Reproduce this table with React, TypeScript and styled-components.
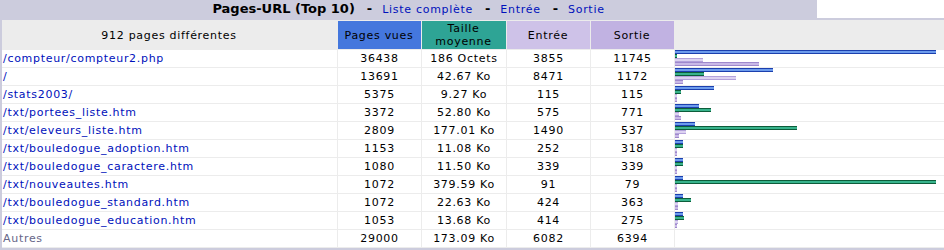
import styled, { createGlobalStyle } from "styled-components";

const GlobalStyle = createGlobalStyle`
    html, body {
        margin: 0;
        padding: 0;
        background: #fff;
        overflow: hidden;
    }
    body {
        font-family: "DejaVu Sans", Verdana, sans-serif;
    }
`;

const Frame = styled.div`
    width: 950px;
`;

const TitleRow = styled.div`
    display: flex;
    height: 18px;
`;

const TitleCell = styled.div`
    width: 817px;
    background: #ccccdd;
    display: flex;
    justify-content: center;
    align-items: center;
    font: bold 13px/18px "DejaVu Sans", Verdana, sans-serif;
    color: #000;
    white-space: nowrap;
`;

const Blank = styled.div`
    flex: 1;
    background: #fff;
`;

const Sep = styled.span`
    font-weight: bold;
    padding: 0 10px 0 12px;
`;

const TitleLink = styled.a`
    font: 11px "DejaVu Sans", Verdana, sans-serif;
    letter-spacing: 0.7px;
    color: #0011bb;
    text-decoration: none;
`;

const DataBox = styled.div`
    border: 2px solid #ccccdd;
    border-bottom-width: 4px;
`;

const Table = styled.table`
    width: 100%;
    table-layout: fixed;
    border-collapse: separate;
    border-spacing: 0;
    background: #fff;
    border-top: 1px solid #ececec;
`;

const Col = styled.col<{ $w?: number }>`
    width: ${(p) => (p.$w ? `${p.$w}px` : "auto")};
`;

const Head = styled.th<{ $bg: string }>`
    box-sizing: border-box;
    background: ${(p) => p.$bg};
    padding: 1px 2px 1px 1px;
    border-right: 1px solid #ececec;
    border-bottom: 1px solid #ececec;
    font: normal 11px/13px "DejaVu Sans", Verdana, sans-serif;
    letter-spacing: 0.7px;
    color: #000;
    text-align: center;
`;

const Cell = styled.td<{ $left?: boolean }>`
    box-sizing: border-box;
    padding: 2px 2px 2px ${(p) => (p.$left ? "1px" : "2px")};
    border-right: 1px solid #ececec;
    border-bottom: 1px solid #ececec;
    font: 11px/13px "DejaVu Sans", Verdana, sans-serif;
    letter-spacing: 0.7px;
    color: #000;
    text-align: ${(p) => (p.$left ? "left" : "center")};
    white-space: nowrap;
    overflow: hidden;
`;

const BarCell = styled.td`
    box-sizing: border-box;
    padding: 0 0 1px 0;
    vertical-align: top;
    border-bottom: 1px solid #ececec;
    line-height: 0;
`;

const PageLink = styled.a`
    color: #0011bb;
    text-decoration: none;
`;

const Others = styled.span`
    color: #666688;
`;

const barColors = {
    p: ["#1b3fae", "#6c9bec"],
    k: ["#0d5d3b", "#38b38c"],
    e: ["#b3a2db", "#dcd2f1"],
    x: ["#9f89cc", "#c9b9e7"],
};

const Bar = styled.div<{ $kind: keyof typeof barColors }>`
    height: 4px;
    background: linear-gradient(
        ${(p) => barColors[p.$kind][0]} 0 1px,
        ${(p) => barColors[p.$kind][1]} 1px 3px,
        ${(p) => barColors[p.$kind][0]} 3px
    );
`;

type Row = {
    url: string;
    pages: number;
    size: string;
    ko: number;
    entry: number;
    exit: number;
};

const rows: Row[] = [
    { url: "/compteur/compteur2.php", pages: 36438, size: "186 Octets", ko: 0.18, entry: 3855, exit: 11745 },
    { url: "/", pages: 13691, size: "42.67 Ko", ko: 42.67, entry: 8471, exit: 1172 },
    { url: "/stats2003/", pages: 5375, size: "9.27 Ko", ko: 9.27, entry: 115, exit: 115 },
    { url: "/txt/portees_liste.htm", pages: 3372, size: "52.80 Ko", ko: 52.8, entry: 575, exit: 771 },
    { url: "/txt/eleveurs_liste.htm", pages: 2809, size: "177.01 Ko", ko: 177.01, entry: 1490, exit: 537 },
    { url: "/txt/bouledogue_adoption.htm", pages: 1153, size: "11.08 Ko", ko: 11.08, entry: 252, exit: 318 },
    { url: "/txt/bouledogue_caractere.htm", pages: 1080, size: "11.50 Ko", ko: 11.5, entry: 339, exit: 339 },
    { url: "/txt/nouveautes.htm", pages: 1072, size: "379.59 Ko", ko: 379.59, entry: 91, exit: 79 },
    { url: "/txt/bouledogue_standard.htm", pages: 1072, size: "22.63 Ko", ko: 22.63, entry: 424, exit: 363 },
    { url: "/txt/bouledogue_education.htm", pages: 1053, size: "13.68 Ko", ko: 13.68, entry: 414, exit: 275 },
];

const MAX_W = 261;
const maxPages = 36438;
const maxKo = 379.59;
const w = (v: number, max: number) => Math.max(2, Math.round((v / max) * MAX_W));

function App() {
    return (
        <Frame>
            <GlobalStyle />
            <TitleRow>
                <TitleCell>
                    Pages-URL (Top 10)
                    <Sep>-</Sep>
                    <TitleLink href="#">Liste complète</TitleLink>
                    <Sep>-</Sep>
                    <TitleLink href="#">Entrée</TitleLink>
                    <Sep>-</Sep>
                    <TitleLink href="#">Sortie</TitleLink>
                </TitleCell>
                <Blank />
            </TitleRow>
            <DataBox>
                <Table>
                    <colgroup>
                        <Col $w={336} />
                        <Col $w={84} />
                        <Col $w={85} />
                        <Col $w={84} />
                        <Col $w={84} />
                        <Col />
                    </colgroup>
                    <thead>
                        <tr>
                            <Head $bg="#ececec">912 pages différentes</Head>
                            <Head $bg="#4477dd">Pages vues</Head>
                            <Head $bg="#2ea495">
                                Taille
                                <br />
                                moyenne
                            </Head>
                            <Head $bg="#cec2e8">Entrée</Head>
                            <Head $bg="#c1b2e2">Sortie</Head>
                            <Head $bg="#ececec">&nbsp;</Head>
                        </tr>
                    </thead>
                    <tbody>
                        {rows.map((r) => (
                            <tr key={r.url}>
                                <Cell $left>
                                    <PageLink href="#">{r.url}</PageLink>
                                </Cell>
                                <Cell>{r.pages}</Cell>
                                <Cell>{r.size}</Cell>
                                <Cell>{r.entry}</Cell>
                                <Cell>{r.exit}</Cell>
                                <BarCell>
                                    <Bar $kind="p" style={{ width: w(r.pages, maxPages) }} />
                                    <Bar $kind="k" style={{ width: w(r.ko, maxKo) }} />
                                    <Bar $kind="e" style={{ width: w(r.entry, maxPages) }} />
                                    <Bar $kind="x" style={{ width: w(r.exit, maxPages) }} />
                                </BarCell>
                            </tr>
                        ))}
                        <tr>
                            <Cell $left>
                                <Others>Autres</Others>
                            </Cell>
                            <Cell>29000</Cell>
                            <Cell>173.09 Ko</Cell>
                            <Cell>6082</Cell>
                            <Cell>6394</Cell>
                            <BarCell />
                        </tr>
                    </tbody>
                </Table>
            </DataBox>
        </Frame>
    );
}

export default App;
